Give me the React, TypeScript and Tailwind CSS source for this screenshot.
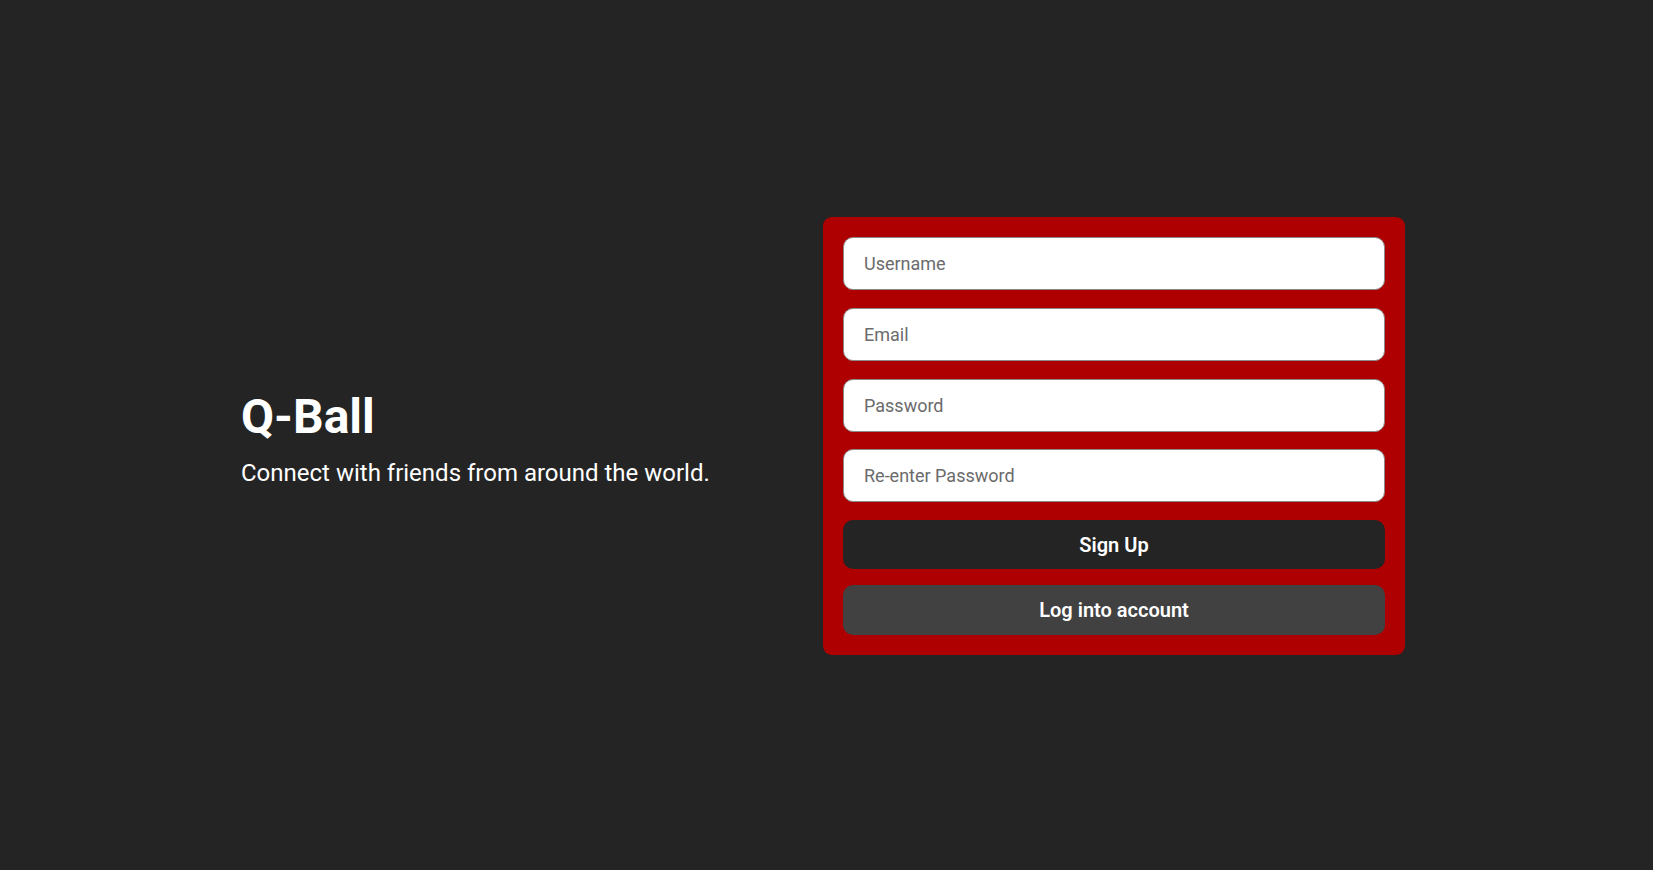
export default function App() {
  return (
    <div
      className="min-h-screen w-full bg-[#242424] flex items-center justify-center pr-[7px] pt-[2px]"
      style={{ fontFamily: "Roboto, 'Noto Sans', sans-serif" }}
    >
      <div className="flex items-center w-[1164px]">
        <div className="w-[582px] flex flex-col mt-2">
          <h1 className="text-[48px] font-bold text-white leading-none">Q-Ball</h1>
          <p className="text-[24px] text-white mt-[17px] leading-[30px]">
            Connect with friends from around the world.
          </p>
        </div>
        <form
          className="w-[582px] bg-[#ae0000] rounded-[9px] p-5 flex flex-col"
          onSubmit={(e) => e.preventDefault()}
        >
          <input
            type="text"
            placeholder="Username"
            className="h-[53px] w-full bg-white border border-[#8a8a8a] rounded-[10px] px-5 text-[18px] text-gray-800 placeholder:text-[#6b6b6b] outline-none"
          />
          <input
            type="email"
            placeholder="Email"
            className="mt-[18px] h-[53px] w-full bg-white border border-[#8a8a8a] rounded-[10px] px-5 text-[18px] text-gray-800 placeholder:text-[#6b6b6b] outline-none"
          />
          <input
            type="password"
            placeholder="Password"
            className="mt-[18px] h-[53px] w-full bg-white border border-[#8a8a8a] rounded-[10px] px-5 text-[18px] text-gray-800 placeholder:text-[#6b6b6b] outline-none"
          />
          <input
            type="password"
            placeholder="Re-enter Password"
            className="mt-[17px] h-[53px] w-full bg-white border border-[#8a8a8a] rounded-[10px] px-5 text-[18px] text-gray-800 placeholder:text-[#6b6b6b] outline-none"
          />
          <button
            type="submit"
            className="mt-[18px] h-[49px] w-full bg-[#242424] rounded-[10px] text-white text-[20px] font-semibold"
          >
            Sign Up
          </button>
          <button
            type="button"
            className="mt-4 h-[50px] w-full bg-[#414141] rounded-[10px] text-white text-[20px] font-semibold"
          >
            Log into account
          </button>
        </form>
      </div>
    </div>
  );
}
